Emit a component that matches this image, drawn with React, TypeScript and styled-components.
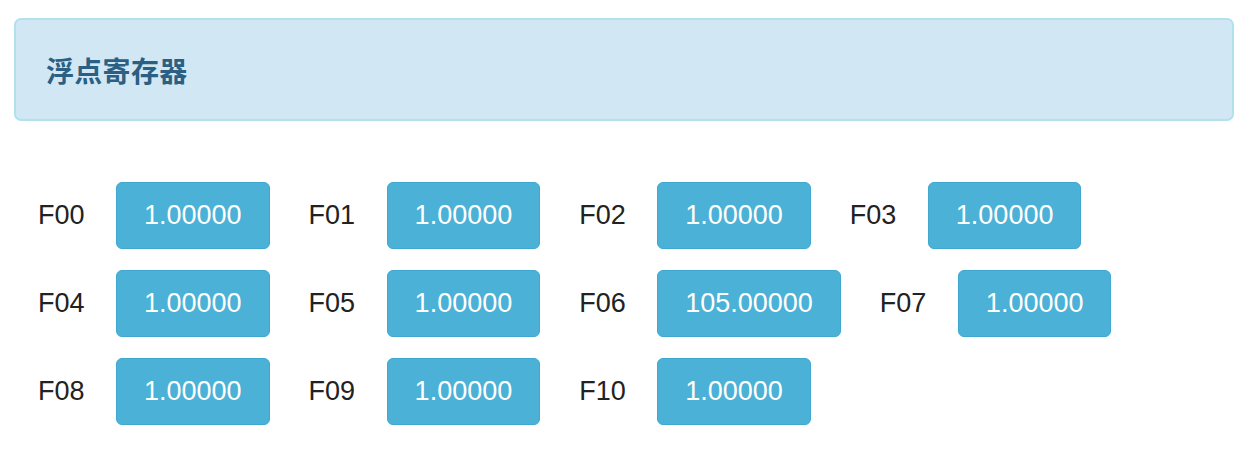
import React from "react";
import styled, { createGlobalStyle } from "styled-components";

const GlobalStyle = createGlobalStyle`
  html, body { margin: 0; padding: 0; background: #ffffff; }
  body { font-family: "Liberation Sans", Arial, "Noto Sans CJK SC", sans-serif; }
`;

const Page = styled.div`
  width: 1256px;
  padding-top: 18px;
`;

const Panel = styled.div`
  box-sizing: border-box;
  margin-left: 14px;
  width: 1220px;
  height: 103px;
  background: #d1e8f4;
  border: 2px solid #b1e1ee;
  border-radius: 7px;
  display: flex;
  align-items: center;
  padding-left: 30px;
`;

const Title = styled.h3`
  margin: 0;
  font-family: "Noto Sans CJK SC", sans-serif;
  font-weight: 700;
  font-size: 28px;
  line-height: 1;
  color: #2b5f83;
  letter-spacing: 0.3px;
`;

const Registers = styled.div`
  margin-top: 61px;
  padding-left: 38px;
  display: flex;
  flex-direction: column;
  gap: 21px;
`;

const Row = styled.div`
  display: flex;
  align-items: center;
`;

const Item = styled.div`
  display: flex;
  align-items: center;
  margin-right: 39px;
`;

const Label = styled.span`
  width: 46px;
  white-space: nowrap;
  font-family: "Liberation Sans", Arial, sans-serif;
  font-size: 27px;
  color: #222222;
  margin-right: 32px;
  line-height: 1;
`;

const ValueButton = styled.button`
  box-sizing: border-box;
  height: 67px;
  padding: 0 27px;
  background: #4bb1d6;
  border: 1px solid #3ea8d0;
  border-radius: 6px;
  color: #ffffff;
  font-family: "Liberation Sans", Arial, sans-serif;
  font-size: 27px;
  line-height: 1;
  cursor: pointer;
`;

const values: string[] = [
  "1.00000", "1.00000", "1.00000", "1.00000",
  "1.00000", "1.00000", "105.00000", "1.00000",
  "1.00000", "1.00000", "1.00000",
];

const rows: { name: string; value: string }[][] = [];
values.forEach((v, i) => {
  const r = Math.floor(i / 4);
  if (!rows[r]) rows[r] = [];
  rows[r].push({ name: "F" + String(i).padStart(2, "0"), value: v });
});

export default function App() {
  return (
    <>
      <GlobalStyle />
      <Page>
        <Panel>
          <Title>浮点寄存器</Title>
        </Panel>
        <Registers>
          {rows.map((row, ri) => (
            <Row key={ri}>
              {row.map((reg) => (
                <Item key={reg.name}>
                  <Label>{reg.name}</Label>
                  <ValueButton>{reg.value}</ValueButton>
                </Item>
              ))}
            </Row>
          ))}
        </Registers>
      </Page>
    </>
  );
}
